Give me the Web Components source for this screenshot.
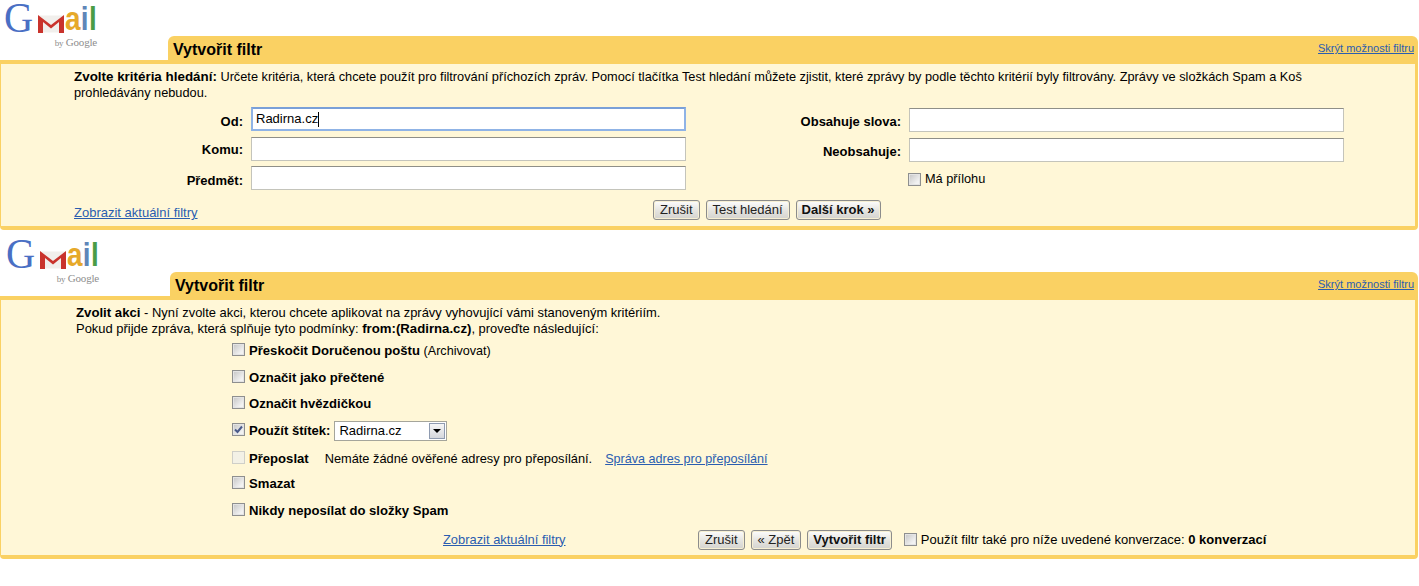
<!DOCTYPE html>
<html lang="cs">
<head>
<meta charset="utf-8">
<title>Vytvořit filtr</title>
<style>
html, body { margin: 0; padding: 0; background: #fff; }
body { font-family: "Liberation Sans", Arial, sans-serif; font-size: 12px; color: #000; width: 1419px; height: 586px; overflow: hidden; }
</style>
</head>
<body>

<filter-panel link="Skrýt možnosti filtru" style="--shift:0px; --body-h:162px; margin-bottom:6px">
  <crit-form></crit-form>
</filter-panel>

<filter-panel link="Skrýt možnosti filtru" style="--shift:2px; --body-h:255px">
  <action-form></action-form>
</filter-panel>

<script>
class GmLogo extends HTMLElement {
  constructor() {
    super();
    this.attachShadow({ mode: "open" }).innerHTML = `
<style>
:host { display: block; width: 100px; height: 50px; }
.word { display: flex; align-items: flex-end; height: 36px; padding-left: 4px; }
.g { font: 43px/36px "Liberation Serif", serif; color: #4a6fc4; width: 34px; display: inline-block; transform: scaleX(.94); transform-origin: left bottom; }
svg { width: 26px; height: 18px; margin-bottom: 3px; flex: none; }
.ail { display: inline-block; font: bold 34px/36px "Liberation Sans", sans-serif; margin-left: 1px; width: 32px; white-space: nowrap; transform: scaleX(.82); transform-origin: left bottom; letter-spacing: .4px; }
.a { color: #e6a92a; } .i { color: #5f86b8; } .l { color: #4a9c46; }
.by { text-align: right; width: 97px; font: 11px/12px "Liberation Serif", serif; color: #8d8d8d; margin-top: 0; letter-spacing: -.2px; }
.by small { font-size: 9px; }
</style>
<div class="word"><span class="g">G</span>
<svg viewBox="0 0 26 18"><rect x=".5" y=".5" width="25" height="17" fill="#f1efec"/>
<path d="M0 0 13 10 26 0V18H21V7L13 13.5 5 7V18H0Z" fill="#c9332c"/></svg>
<span class="ail"><span class="a">a</span><span class="i">i</span><span class="l">l</span></span></div>
<div class="by"><small>by</small> Google</div>`;
  }
}

class FilterPanel extends HTMLElement {
  constructor() {
    super();
    this.attachShadow({ mode: "open" }).innerHTML = `
<style>
:host { display: block; width: 1419px; --y: #fad163; }
.top { display: flex; align-items: flex-end; height: 60px; }
.logo { width: calc(168px + var(--shift)); height: 60px; flex: none; padding-left: var(--shift); box-sizing: border-box; }
.tab { flex: 1; height: 24px; margin-right: 1px; background: var(--y); border-radius: 6px 6px 0 0; display: flex; justify-content: space-between; padding: 0 4px 0 5px; }
h1 { margin: 3px 0 0; font: bold 16px/22px "Liberation Sans", sans-serif; }
a { font-size: 11px; line-height: 12px; margin-top: 6px; color: #2a5db0; text-decoration: underline; }
.body { margin-right: 1px; height: var(--body-h); background: #fff7d7; border: solid var(--y); border-width: 4px 3px 4px 1px; border-radius: 0 0 4px 4px; }
</style>
<div class="top"><div class="logo"><gm-logo></gm-logo></div>
<div class="tab"><h1>Vytvořit filtr</h1><a>${this.getAttribute("link")}</a></div></div>
<div class="body"><slot></slot></div>`;
  }
}

class GmButton extends HTMLElement {
  constructor() {
    super();
    this.attachShadow({ mode: "open" }).innerHTML = `
<style>
:host { display: inline-flex; align-items: center; height: 18px; padding: 0 6px; border: 1px solid #8c8c8c; border-radius: 3px; background: linear-gradient(#fdfdfd, #e4e3df 55%, #d4d3cf); box-shadow: 0 0 0 1px #f6efd3 inset; font-size: 13px; color: #222; white-space: nowrap; }
:host([primary]) { font-weight: bold; color: #111; padding: 0 5px; }
</style><slot></slot>`;
  }
}

class GmCheck extends HTMLElement {
  constructor() {
    super();
    const checked = this.hasAttribute("checked");
    this.attachShadow({ mode: "open" }).innerHTML = `
<style>
:host { display: inline-block; width: 11px; height: 11px; border: 1px solid #8e8f8f; background: linear-gradient(135deg, #c4c4c4, #f2f2f2 75%); box-shadow: 0 0 0 1px #e4e4e4 inset; flex: none; position: relative; }
:host([disabled]) { border-color: #cfcfc8; background: #f3f1e6; box-shadow: none; }
svg { position: absolute; inset: 0; width: 11px; height: 11px; }
</style>${checked ? '<svg viewBox="0 0 11 11"><path d="M2 5.5 4.5 8 9 2.5" fill="none" stroke="#4a5a8a" stroke-width="2"/></svg>' : ""}`;
  }
}

class GmField extends HTMLElement {
  constructor() {
    super();
    this.attachShadow({ mode: "open" }).innerHTML = `
<style>
:host { display: flex; align-items: center; box-sizing: border-box; height: 24px; width: 435px; padding-left: 4px; background: #fff; border: 1px solid #c4c4bb; border-top-color: #8f8f88; font-size: 13px; }
:host([focused]) { border: 2px solid #8fb3e6; border-top-color: #7aa0d8; padding-left: 3px; }
:host([low]) { margin-top: 1px; }
i { width: 1px; height: 15px; background: #000; }
</style><slot></slot>${this.hasAttribute("focused") ? "<i></i>" : ""}`;
  }
}

class GmSelect extends HTMLElement {
  constructor() {
    super();
    this.attachShadow({ mode: "open" }).innerHTML = `
<style>
:host { display: inline-flex; align-items: center; justify-content: space-between; box-sizing: border-box; width: 113px; height: 20px; background: #fff; border: 1px solid #a5a59b; padding: 0 1px 0 4px; font-size: 13px; font-weight: normal; }
b { width: 16px; height: 16px; box-sizing: border-box; border: 1px solid #8f9bb0; background: linear-gradient(#f6f6f6, #d5d7dc); position: relative; }
b::after { content: ""; position: absolute; left: 3px; top: 5px; border: 4px solid transparent; border-top: 4px solid #000; border-bottom: 0; }
</style><slot></slot><b></b>`;
  }
}

class CritForm extends HTMLElement {
  constructor() {
    super();
    this.attachShadow({ mode: "open" }).innerHTML = `
<style>
:host { display: block; font-size: 12.75px; line-height: 16px; padding: 5px 0 0 73px; }
p { margin: 0; white-space: nowrap; }
p b { font-size: 13.4px; }
.grid { display: grid; grid-template-columns: 170px 435px 223px 435px 1fr; grid-template-rows: 30px 29px 30px; margin-top: 6px; margin-left: 7px; align-items: start; }
.l { font-weight: bold; font-size: 13px; text-align: right; padding-right: 8px; line-height: 29px; }
.l.up { line-height: 25px; }
.att { display: flex; align-items: center; gap: 4px; padding-top: 5px; grid-column: 4; margin-left: -1px; }
.foot { display: flex; align-items: flex-start; margin-top: 4px; }
.foot a { color: #2a5db0; text-decoration: underline; font-size: 13px; padding-top: 5px; width: 579px; }
.btns { display: flex; gap: 6px; }
</style>
<p><b>Zvolte kritéria hledání:</b> Určete kritéria, která chcete použít pro filtrování příchozích zpráv. Pomocí tlačítka Test hledání můžete zjistit, které zprávy by podle těchto kritérií byly filtrovány. Zprávy ve složkách Spam a Koš<br>prohledávány nebudou.</p>
<div class="grid">
  <div class="l">Od:</div><gm-field focused>Radirna.cz</gm-field><div class="l">Obsahuje slova:</div><gm-field low></gm-field><span></span>
  <div class="l up">Komu:</div><gm-field></gm-field><div class="l">Neobsahuje:</div><gm-field low></gm-field><span></span>
  <div class="l">Předmět:</div><gm-field></gm-field><span></span><div class="att"><gm-check></gm-check>Má přílohu</div>
</div>
<div class="foot"><a>Zobrazit aktuální filtry</a><div class="btns"><gm-button>Zrušit</gm-button><gm-button>Test hledání</gm-button><gm-button primary>Další krok »</gm-button></div></div>`;
  }
}

class ActionForm extends HTMLElement {
  constructor() {
    super();
    this.attachShadow({ mode: "open" }).innerHTML = `
<style>
:host { display: block; font-size: 12.8px; line-height: 16px; padding: 5px 0 0 75px; }
.intro { font-size: 12.95px; }
.intro b { font-size: 13.2px; }
ul { list-style: none; margin: 1px 0 0 156px; padding: 0; }
li { display: flex; align-items: center; gap: 4px; box-sizing: border-box; height: 26.5px; white-space: nowrap; }
li.fw { padding-top: 3px; }
li.last { padding-top: 2px; }
li gm-check { margin-top: -3px; }
li b { font-size: 13.1px; }
.arch { font-size: 12.6px; }
.note { margin-left: 12px; }
li a { margin-left: 9px; font-size: 12.6px; color: #2a5db0; text-decoration: underline; }
.foot { display: flex; align-items: center; margin: 6px 0 0 367px; white-space: nowrap; }
.foot > a { font-size: 12.9px; width: 255px; color: #2a5db0; text-decoration: underline; }
.btns { display: flex; gap: 6px; margin-right: 12px; }
.foot gm-check { margin-right: 4px; }
.foot span { font-size: 13px; }
</style>
<div class="intro"><b>Zvolit akci</b> - Nyní zvolte akci, kterou chcete aplikovat na zprávy vyhovující vámi stanoveným kritériím.<br>
Pokud přijde zpráva, která splňuje tyto podmínky: <b>from:(Radirna.cz)</b>, proveďte následující:</div>
<ul>
  <li><gm-check></gm-check><span><b>Přeskočit Doručenou poštu</b> <span class="arch">(Archivovat)</span></span></li>
  <li><gm-check></gm-check><b>Označit jako přečtené</b></li>
  <li><gm-check></gm-check><b>Označit hvězdičkou</b></li>
  <li><gm-check checked></gm-check><b>Použít štítek:</b><gm-select>Radirna.cz</gm-select></li>
  <li class="fw"><gm-check disabled></gm-check><b>Přeposlat</b><span class="note">Nemáte žádné ověřené adresy pro přeposílání.</span><a>Správa adres pro přeposílání</a></li>
  <li><gm-check></gm-check><b>Smazat</b></li>
  <li class="last"><gm-check></gm-check><b>Nikdy neposílat do složky Spam</b></li>
</ul>
<div class="foot"><a>Zobrazit aktuální filtry</a><div class="btns"><gm-button>Zrušit</gm-button><gm-button>« Zpět</gm-button><gm-button primary>Vytvořit filtr</gm-button></div><gm-check></gm-check><span>Použít filtr také pro níže uvedené konverzace: <b>0 konverzací</b></span></div>`;
  }
}

customElements.define("gm-logo", GmLogo);
customElements.define("gm-button", GmButton);
customElements.define("gm-check", GmCheck);
customElements.define("gm-field", GmField);
customElements.define("gm-select", GmSelect);
customElements.define("crit-form", CritForm);
customElements.define("action-form", ActionForm);
customElements.define("filter-panel", FilterPanel);
</script>
</body>
</html>
